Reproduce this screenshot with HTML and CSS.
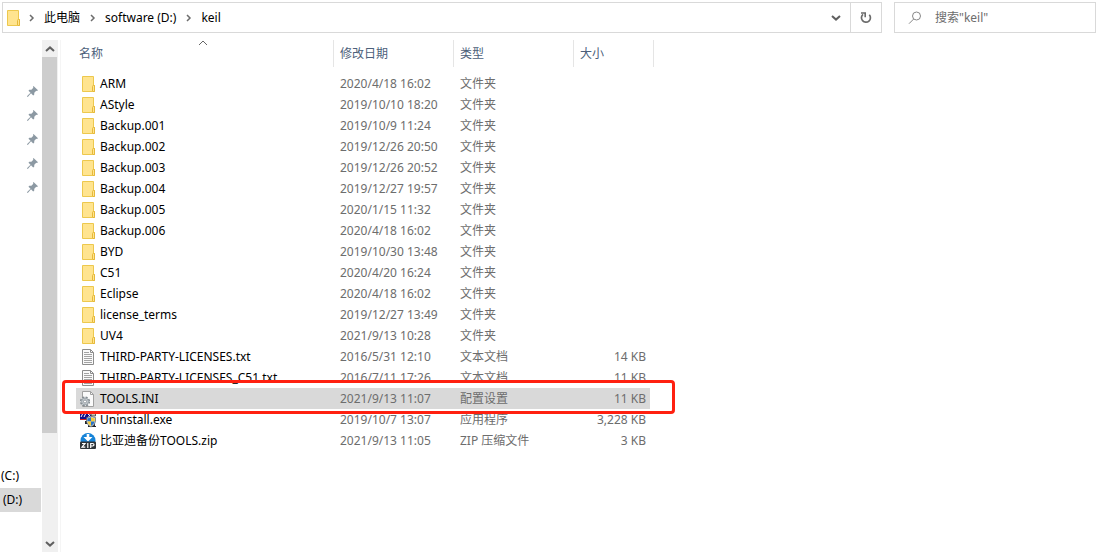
FILE: index.html
```html
<!DOCTYPE html>
<html lang="zh-CN">
<head>
<meta charset="utf-8">
<title>keil</title>
<link rel="stylesheet" href="styles.css">
</head>
<body>
<svg class="defs" aria-hidden="true">
  <symbol id="folder" viewBox="0 0 16 16"><path d="M2.500 .5H13.500V9.500H14.500V15.500H2.500Z" fill="#ffe48f" stroke="#edc84d"/><path d="M12.500 15V10.500Q12.500 9.500 13.500 9.500H14.500V15.500H12.500" fill="#ffe48f" stroke="#e6b93a"/></symbol>
  <symbol id="text" viewBox="0 0 16 16"><path d="M2.500.5H10.500L13.500 3.500V15.500H2.500Z" fill="#fafafa" stroke="#8c8c8c"/><path d="M10.500.5V3.500H13.500" fill="none" stroke="#8c8c8c"/><path d="M4 3.500H9M4 5.500H12M4 7.500H12M4 9.500H12M4 11.500H12M4 13.500H12" stroke="#a3a3a3"/></symbol>
  <symbol id="ini" viewBox="0 0 16 16"><path d="M2.500.5H10.500L13.500 3.500V15.500H2.500Z" fill="#fafafa" stroke="#a0a0a0"/><path d="M10.500.5V3.500H13.500" fill="none" stroke="#a0a0a0"/><circle cx="5" cy="10.500" r="4.300" fill="#dfe3e6" stroke="#848c92" stroke-width="1.600" stroke-dasharray="2 1.400"/><circle cx="5" cy="10.500" r="3.400" fill="#c7cdd1" stroke="#8a9298" stroke-width=".7"/><circle cx="5" cy="10.500" r="1.500" fill="#fff" stroke="#848c92" stroke-width=".8"/></symbol>
  <symbol id="exe" viewBox="0 0 16 16"><path d="M0 0H12V8H0Z" fill="#10108c"/><path d="M1 5L3 1M4 5L6 1M8 2L11 5M11 1L8 6" stroke="#fff"/><path d="M0 7.500H7" stroke="#d32020"/><path d="M11 0H15.500V4H11Z" fill="#c6c6b8" stroke="#222" stroke-width=".7"/><path d="M5 9H15V14H16V15H8V12H5Z" fill="#20242a"/><path d="M11 4Q13 5.500 15.500 5.500V9.500Q15 13 11 15Q7 13 6.500 9.500V5.500Q9 5.500 11 4Z" fill="#e9e9e9" stroke="#35424b" stroke-width=".6"/><path d="M11 5V9.500H7.300V6.300Q9.300 6.200 11 5Z" fill="#2873c6"/><path d="M11 5Q12.700 6.300 14.800 6.300V9.500H11Z" fill="#f4ca38"/><path d="M7.300 9.500H11V14Q8 12.500 7.300 9.500Z" fill="#f4ca38"/><path d="M11 9.500H14.800Q14 12.500 11 14Z" fill="#2873c6"/></symbol>
  <symbol id="zip" viewBox="0 0 16 16"><circle cx="8" cy="7.500" r="7.500" fill="#1683d8"/><path d="M6.700 1H9.300V4H12.500L8 8.500L3.500 4H6.700Z" fill="#fff"/><rect y="8.500" width="16" height="7.500" rx="1" fill="#2c3338"/><path d="M2 10.500H5L2 14.200H5.300M7.800 10V15M10.700 15V10.500H12.500Q14 10.500 14 11.700T12.500 13H10.700" fill="none" stroke="#fff" stroke-width="1.200"/></symbol>
  <symbol id="pin" viewBox="0 0 11 11"><path d="M6.500 0L11 4.300L10 5L9.200 4.800L7.300 6.700L7.200 8.800L6.200 9.500L4 7.300L1 10.700L0 11L.4 9.800L3.500 6.800L1.500 4.700L2.200 3.800L4.400 3.700L6.300 1.800L6 .8Z" fill="#8c99a3"/></symbol>
  <symbol id="next" viewBox="0 0 6 8"><path d="M1 1L4 4L1 7" fill="none" stroke="#6d6d6d" stroke-width="1.500"/></symbol>
  <symbol id="down" viewBox="0 0 10 6"><path d="M1 1L5 4.600L9 1" fill="none" stroke="currentColor" stroke-width="2"/></symbol>
  <symbol id="up" viewBox="0 0 10 6"><path d="M1 5L5 1.400L9 5" fill="none" stroke="currentColor" stroke-width="2"/></symbol>
</svg>
<header class="toolbar">
  <nav class="address" aria-label="路径">
    <svg class="icon"><use href="#folder"/></svg>
    <svg class="sep"><use href="#next"/></svg><a href="#pc">此电脑</a>
    <svg class="sep"><use href="#next"/></svg><a href="#d">software (D:)</a>
    <svg class="sep"><use href="#next"/></svg><a href="#keil">keil</a>
    <button class="history" aria-label="以前的位置"><svg class="arrow"><use href="#down"/></svg></button>
    <button class="refresh" aria-label="刷新"><svg width="12" height="12" viewBox="0 0 12 12"><path d="M3 2.300A4.500 4.500 0 1 0 9.300 2.700" fill="none" stroke="#6b6b6b" stroke-width="1.700"/><path d="M1 1H5.200V5.200" fill="none" stroke="#6b6b6b" stroke-width="1.600"/></svg></button>
  </nav>
  <label class="search">
    <svg width="14" height="14" viewBox="0 0 14 14"><circle cx="8.500" cy="5" r="4" fill="none" stroke="#888"/><path d="M5.700 8L1 12.700" stroke="#888"/></svg>
    <input type="text" aria-label="搜索" placeholder='搜索"keil"'>
  </label>
</header>
<div class="body">
  <nav class="sidebar" aria-label="导航">
    <div class="pins">
      <svg class="pin"><use href="#pin"/></svg><svg class="pin"><use href="#pin"/></svg><svg class="pin"><use href="#pin"/></svg><svg class="pin"><use href="#pin"/></svg><svg class="pin"><use href="#pin"/></svg>
    </div>
    <a class="drive" href="#c">(C:)</a>
    <a class="drive current" href="#d">(D:)</a>
  </nav>
  <div class="scrollbar">
    <button aria-label="向上滚动"><svg class="arrow"><use href="#up"/></svg></button>
    <div class="track"><div class="thumb"></div></div>
    <button aria-label="向下滚动"><svg class="arrow"><use href="#down"/></svg></button>
  </div>
  <main class="files">
    <table>
      <colgroup><col class="c-name"><col class="c-mid"><col class="c-mid"><col class="c-size"></colgroup>
      <thead><tr><th class="sorted">名称<svg class="sort" viewBox="0 0 10 6"><path d="M1 5L5 1L9 5" fill="none" stroke="#666"/></svg></th><th>修改日期</th><th>类型</th><th>大小</th></tr></thead>
      <tbody>
        <tr><td><span class="file"><svg class="icon"><use href="#folder"/></svg>ARM</span></td><td>2020/4/18 16:02</td><td>文件夹</td><td></td></tr>
        <tr><td><span class="file"><svg class="icon"><use href="#folder"/></svg>AStyle</span></td><td>2019/10/10 18:20</td><td>文件夹</td><td></td></tr>
        <tr><td><span class="file"><svg class="icon"><use href="#folder"/></svg>Backup.001</span></td><td>2019/10/9 11:24</td><td>文件夹</td><td></td></tr>
        <tr><td><span class="file"><svg class="icon"><use href="#folder"/></svg>Backup.002</span></td><td>2019/12/26 20:50</td><td>文件夹</td><td></td></tr>
        <tr><td><span class="file"><svg class="icon"><use href="#folder"/></svg>Backup.003</span></td><td>2019/12/26 20:52</td><td>文件夹</td><td></td></tr>
        <tr><td><span class="file"><svg class="icon"><use href="#folder"/></svg>Backup.004</span></td><td>2019/12/27 19:57</td><td>文件夹</td><td></td></tr>
        <tr><td><span class="file"><svg class="icon"><use href="#folder"/></svg>Backup.005</span></td><td>2020/1/15 11:32</td><td>文件夹</td><td></td></tr>
        <tr><td><span class="file"><svg class="icon"><use href="#folder"/></svg>Backup.006</span></td><td>2020/4/18 16:02</td><td>文件夹</td><td></td></tr>
        <tr><td><span class="file"><svg class="icon"><use href="#folder"/></svg>BYD</span></td><td>2019/10/30 13:48</td><td>文件夹</td><td></td></tr>
        <tr><td><span class="file"><svg class="icon"><use href="#folder"/></svg>C51</span></td><td>2020/4/20 16:24</td><td>文件夹</td><td></td></tr>
        <tr><td><span class="file"><svg class="icon"><use href="#folder"/></svg>Eclipse</span></td><td>2020/4/18 16:02</td><td>文件夹</td><td></td></tr>
        <tr><td><span class="file"><svg class="icon"><use href="#folder"/></svg>license_terms</span></td><td>2019/12/27 13:49</td><td>文件夹</td><td></td></tr>
        <tr><td><span class="file"><svg class="icon"><use href="#folder"/></svg>UV4</span></td><td>2021/9/13 10:28</td><td>文件夹</td><td></td></tr>
        <tr><td><span class="file"><svg class="icon"><use href="#text"/></svg>THIRD-PARTY-LICENSES.txt</span></td><td>2016/5/31 12:10</td><td>文本文档</td><td>14 KB</td></tr>
        <tr><td><span class="file"><svg class="icon"><use href="#text"/></svg>THIRD-PARTY-LICENSES_C51.txt</span></td><td>2016/7/11 17:26</td><td>文本文档</td><td>11 KB</td></tr>
        <tr class="selected"><td><span class="file"><svg class="icon"><use href="#ini"/></svg>TOOLS.INI</span><span class="marker"></span></td><td>2021/9/13 11:07</td><td>配置设置</td><td>11 KB</td></tr>
        <tr><td><span class="file"><svg class="icon"><use href="#exe"/></svg>Uninstall.exe</span></td><td>2019/10/7 13:07</td><td>应用程序</td><td>3,228 KB</td></tr>
        <tr><td><span class="file"><svg class="icon"><use href="#zip"/></svg>比亚迪备份TOOLS.zip</span></td><td>2021/9/13 11:05</td><td>ZIP 压缩文件</td><td>3 KB</td></tr>
      </tbody>
    </table>
  </main>
</div>
</body>
</html>
```
FILE: styles.css
```css
* { box-sizing: border-box; }
body {
  margin: 0;
  min-height: 100vh;
  display: flex;
  flex-direction: column;
  background: #fff;
  color: #000;
  font: 12px/20px "Noto Sans", "Noto Sans CJK SC", sans-serif;
}
svg { display: block; flex: none; }
.defs { position: absolute; width: 0; height: 0; }
a { color: inherit; text-decoration: none; }
button { border: 0; padding: 0; background: none; display: flex; align-items: center; justify-content: center; color: #606060; }
.icon { width: 16px; height: 16px; }
.arrow { width: 10px; height: 6px; }

.toolbar { display: flex; gap: 12px; padding: 2px 12px 7px 2px; }
.address, .search { height: 31px; border: 1px solid #d9d9d9; display: flex; align-items: center; }
.address { flex: 1; padding-left: 2px; }
.address .icon { margin-right: -2px; }
.sep { width: 6px; height: 8px; margin: 0 9px 0 10px; }
.history { margin-left: auto; width: 29px; height: 100%; }
.refresh { width: 31px; height: 100%; border-left: 1px solid #d9d9d9; }
.search { width: 202px; padding-left: 13px; gap: 13px; }
.search input { flex: 1; min-width: 0; border: 0; padding: 0; outline: 0; background: none; font: inherit; }
.search input::placeholder { color: #6d6d6d; opacity: 1; }

.body { flex: 1; display: flex; }
.sidebar { width: 42px; padding: 40px 1px 40px 0; }
.pins { display: flex; flex-direction: column; align-items: flex-end; gap: 13px; padding: 6px 3px 271px 0; }
.pin { width: 11px; height: 11px; }
.drive { display: block; height: 24px; line-height: 24px; padding-left: 1px; }
.drive.current { padding-left: 3px; background: #d9d9d9; }

.scrollbar { width: 16px; display: flex; flex-direction: column; background: #f0f0f0; }
.scrollbar button { width: 15px; height: 17px; }
.track { flex: 1; }
.thumb { width: 15px; height: 376px; background: #cdcdcd; }

.files { flex: 1; margin-left: 2px; padding-left: 15px; border-left: 1px solid #f5f5f5; }
table { border-collapse: separate; border-spacing: 0; table-layout: fixed; width: 578px; }
.c-name { width: 258px; }
.c-mid { width: 120px; }
.c-size { width: 80px; }
th { height: 27px; padding: 0 0 0 6px; text-align: left; font-weight: 400; color: #4c607a; border-right: 1px solid #e5e5e5; }
th.sorted { position: relative; padding-left: 3px; }
.sort { position: absolute; width: 10px; height: 6px; top: 0; left: 122px; }
td { height: 21px; padding: 0 0 0 6px; color: #6d6d6d; white-space: nowrap; }
tbody::before { content: ""; display: block; height: 6px; }
td:first-child { padding-left: 4px; color: #000; position: relative; }
td:last-child { padding: 0 4px 0 0; text-align: right; border-right: 4px solid #fff; background-clip: padding-box; }
.file { display: flex; align-items: center; gap: 4px; }
.selected td { background-color: #d9d9d9; }
.marker { position: absolute; z-index: 1; left: -14px; top: -8px; width: 613px; height: 34px; border: 3px solid #ff2010; border-radius: 4px; }
```
